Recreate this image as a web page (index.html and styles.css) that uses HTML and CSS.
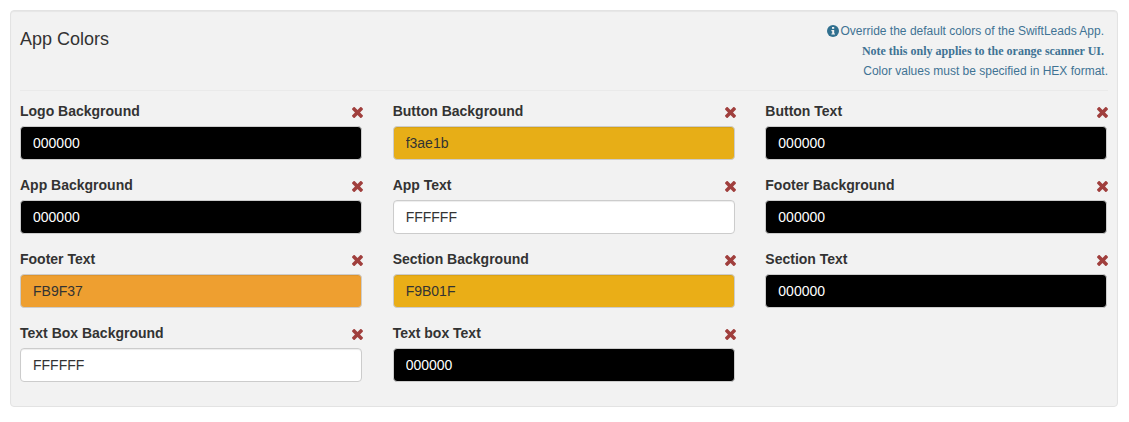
FILE: index.html
```html
<!DOCTYPE html>
<html>
<head>
<meta charset="utf-8">
<title>App Colors</title>
<link rel="stylesheet" href="styles.css">
</head>

<body>
<svg class="defs" width="0" height="0">
	<symbol id="remove" viewBox="110 116 1188 1176"><path d="M1298 1060q0 40-28 68l-136 136q-28 28-68 28t-68-28l-294-294-294 294q-28 28-68 28t-68-28l-136-136q-28-28-28-68t28-68l294-294-294-294q-28-28-28-68t28-68l136-136q28-28 68-28t68 28l294 294 294-294q28-28 68-28t68 28l136 136q28 28 28 68t-28 68l-294 294 294 294q28 28 28 68z"/></symbol>
</svg>
<div class="m-well">
	<div class="head">
		<h3>App Colors</h3>
		<div class="note">
			<p class="first"><svg class="info" viewBox="0 0 12 12"><circle cx="6" cy="6" r="6" fill="#31708f"/><rect x="5" y="2" width="2.2" height="1.8" fill="#f1f1f1"/><path d="M4.4 5h2.8v3.4h.8v1.2H4.4V8.4h.8V6.2h-.8z" fill="#f1f1f1"/></svg>Override the default colors of the SwiftLeads App.</p>
			<p class="first"><b>Note this only applies to the orange scanner UI.</b></p>
			<p>Color values must be specified in HEX format.</p>
		</div>
	</div>
	<div class="grid">
		<div class="field">
			<div class="top"><label>Logo Background</label><svg class="del"><use href="#remove"/></svg></div>
			<input class="black" type="text" value="000000">
		</div>
		<div class="field">
			<div class="top"><label>Button Background</label><svg class="del"><use href="#remove"/></svg></div>
			<input class="gold" type="text" value="f3ae1b">
		</div>
		<div class="field">
			<div class="top"><label>Button Text</label><svg class="del"><use href="#remove"/></svg></div>
			<input class="black" type="text" value="000000">
		</div>
		<div class="field">
			<div class="top"><label>App Background</label><svg class="del"><use href="#remove"/></svg></div>
			<input class="black" type="text" value="000000">
		</div>
		<div class="field">
			<div class="top"><label>App Text</label><svg class="del"><use href="#remove"/></svg></div>
			<input class="white" type="text" value="FFFFFF">
		</div>
		<div class="field">
			<div class="top"><label>Footer Background</label><svg class="del"><use href="#remove"/></svg></div>
			<input class="black" type="text" value="000000">
		</div>
		<div class="field">
			<div class="top"><label>Footer Text</label><svg class="del"><use href="#remove"/></svg></div>
			<input class="orange" type="text" value="FB9F37">
		</div>
		<div class="field">
			<div class="top"><label>Section Background</label><svg class="del"><use href="#remove"/></svg></div>
			<input class="amber" type="text" value="F9B01F">
		</div>
		<div class="field">
			<div class="top"><label>Section Text</label><svg class="del"><use href="#remove"/></svg></div>
			<input class="black" type="text" value="000000">
		</div>
		<div class="field">
			<div class="top"><label>Text Box Background</label><svg class="del"><use href="#remove"/></svg></div>
			<input class="white" type="text" value="FFFFFF">
		</div>
		<div class="field">
			<div class="top"><label>Text box Text</label><svg class="del"><use href="#remove"/></svg></div>
			<input class="black" type="text" value="000000">
		</div>
	</div>
</div>
</body>
</html>
```

FILE: styles.css
```css
*{margin:0;padding:0;box-sizing:border-box;}
body{padding:10px 11px 0 10px;background:#fff;font-family:"Liberation Sans",Arial,sans-serif;font-size:14px;color:#333;}
.defs{position:absolute;}

/** panel **/
.m-well{height:397px;padding:0 9px;background:#f2f2f2;border:1px solid #e3e3e3;border-radius:4px;box-shadow:inset 0 1px 1px rgba(0,0,0,.05);}
.head{display:flex;justify-content:space-between;height:80px;border-bottom:1px solid #eaeaea;}
.head h3{padding-top:18px;font-size:18px;font-weight:normal;line-height:20px;}
.note{padding-top:10px;text-align:right;font-size:12px;line-height:20px;color:#3f7394;}
.note .first{padding-right:4px;}
.note b{font-family:"Liberation Serif","Times New Roman",serif;}
.info{width:12px;height:12px;margin-right:2px;vertical-align:-2px;}

/** fields **/
.grid{display:grid;grid-template-columns:repeat(3,342px);column-gap:30.67px;row-gap:15px;padding-top:10px;}
.top{display:flex;justify-content:space-between;align-items:flex-end;height:25px;padding-bottom:5px;}
.top label{font-weight:bold;line-height:20px;}
.del{width:11px;height:11px;margin:0 -1px 3px 0;fill:#a03f3d;}
.field input{display:block;width:100%;height:34px;padding:6px 12px;font:14px "Liberation Sans",Arial,sans-serif;border:1px solid #ccc;border-radius:4px;box-shadow:inset 0 1px 1px rgba(0,0,0,.075);}
.black{background:#000;color:#fff;}
.white{background:#fff;color:#333;}
.gold{background:#e7ae17;color:#333;}
.orange{background:#ee9f30;color:#333;}
.amber{background:#eaae17;color:#333;}
```
